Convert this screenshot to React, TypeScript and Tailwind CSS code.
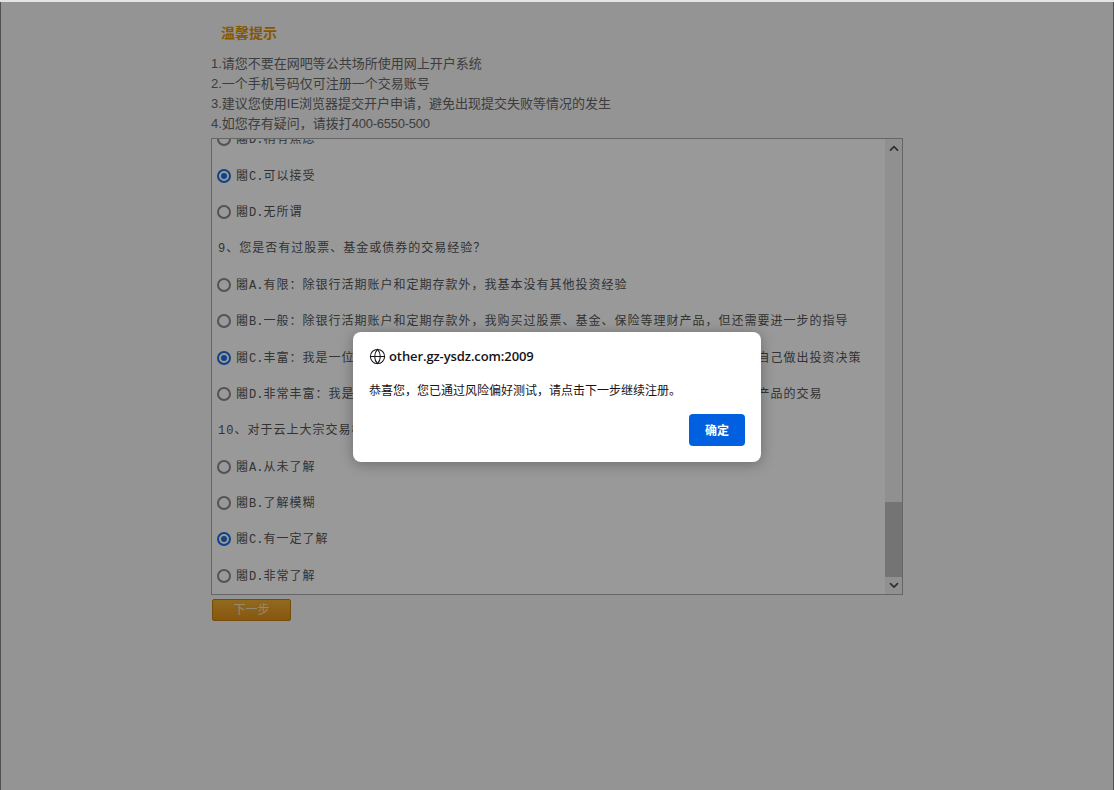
import { ChevronUp, ChevronDown, Globe } from 'lucide-react';

type Row = {
  text: string;
  opt?: string;
  checked?: boolean;
};

const rows: Row[] = [
  { opt: 'D.', text: '稍有焦虑' },
  { opt: 'C.', text: '可以接受', checked: true },
  { opt: 'D.', text: '无所谓' },
  { text: '9、您是否有过股票、基金或债券的交易经验？' },
  { opt: 'A.', text: '有限：除银行活期账户和定期存款外，我基本没有其他投资经验' },
  { opt: 'B.', text: '一般：除银行活期账户和定期存款外，我购买过股票、基金、保险等理财产品，但还需要进一步的指导' },
  { opt: 'C.', text: '丰富：我是一位有经验的投资者，参与过股票、基金等金融产品的交易，并且更倾向于自己做出投资决策', checked: true },
  { opt: 'D.', text: '非常丰富：我是一位资历非常深的投资者，参与过权证、期货、期权或创业板等高风险产品的交易' },
  { text: '10、对于云上大宗交易模式的了解程度？' },
  { opt: 'A.', text: '从未了解' },
  { opt: 'B.', text: '了解模糊' },
  { opt: 'C.', text: '有一定了解', checked: true },
  { opt: 'D.', text: '非常了解' },
];

function Radio({ checked }: { checked?: boolean }) {
  return (
    <span
      className={`flex h-[14px] w-[14px] shrink-0 items-center justify-center rounded-full border-2 bg-white ${
        checked ? 'border-[#1f6fe0]' : 'border-[#8a8a8f]'
      }`}
    >
      {checked && <span className="h-[6px] w-[6px] rounded-full bg-[#1f6fe0]" />}
    </span>
  );
}

export default function App() {
  return (
    <div className="relative flex h-[790px] w-[1114px] flex-col overflow-hidden bg-[#f7f7f7] font-['Liberation_Sans','Noto_Sans_CJK_SC',sans-serif]">
      <div className="h-[2px] shrink-0 bg-[#e4e4e4]" />

      <div className="relative flex-1 border-x border-x-[#888]">
        <div className="mx-auto w-[692px]">
          <h2 className="pl-[10px] pt-[21px] text-[14px] font-bold leading-5 text-[#e09000]">温馨提示</h2>
          <ul className="pt-[11px] text-[13px] leading-5 text-[#666]">
            <li>1.请您不要在网吧等公共场所使用网上开户系统</li>
            <li>2.一个手机号码仅可注册一个交易账号</li>
            <li>3.建议您使用IE浏览器提交开户申请，避免出现提交失败等情况的发生</li>
            <li>
              4.如您存有疑问，请拨打<span className="tracking-[-0.25px]">400-6550-500</span>
            </li>
          </ul>

          <div className="mt-[4px] flex h-[457px] overflow-hidden border border-[#aaa] bg-white">
            <div className="min-w-0 flex-1 overflow-hidden">
              <div className="-mt-[18px] pl-[5px] font-['Liberation_Mono','Noto_Sans_CJK_SC',monospace] text-[12px] tracking-[1px] text-[#555]">
                {rows.map((row) =>
                  row.opt ? (
                    <label key={row.text} className="flex h-[36.4px] items-center gap-[5px] whitespace-nowrap">
                      <Radio checked={row.checked} />
                      <span className="pt-[2px]">
                        闂<span className="tracking-normal">{row.opt}</span>
                        {row.text}
                      </span>
                    </label>
                  ) : (
                    <p key={row.text} className="flex h-[36.4px] items-center whitespace-nowrap pl-[1px] pt-[2px]">
                      {row.text}
                    </p>
                  ),
                )}
              </div>
            </div>

            <div className="flex w-[17px] shrink-0 flex-col items-center bg-[#f1f1f1] text-[#505050]">
              <ChevronUp size={14} strokeWidth={3} className="mt-[1px] h-[17px]" />
              <div className="mt-[345px] h-[76px] w-full bg-[#c1c1c1]" />
              <ChevronDown size={14} strokeWidth={3} className="h-[17px]" />
            </div>
          </div>

          <button className="mt-[4px] ml-[1px] h-[22px] w-[79px] rounded-[2px] border border-[#c47f10] bg-gradient-to-b from-[#f2b133] to-[#e2901a] text-[12px] leading-5 text-white/70">
            下一步
          </button>
        </div>
      </div>

      {/* dimmed page + browser alert */}
      <div className="absolute inset-0 top-[2px] bg-black/40" />
      <div className="absolute left-[353px] top-[332px] flex h-[130px] w-[408px] flex-col rounded-lg bg-white px-4 pt-[14px] shadow-[0_2px_14px_rgba(0,0,0,0.3)] font-['Open_Sans','Noto_Sans_CJK_SC',sans-serif]">
        <div className="flex items-center gap-[3px] text-[13px] font-semibold leading-[20px] tracking-[-0.1px] text-[#15141a]">
          <Globe size={17} strokeWidth={1.5} />
          <span>other.gz-ysdz.com:2009</span>
        </div>
        <p className="mt-[16px] text-[12px] leading-[18px] text-[#15141a]">
          恭喜您，您已通过风险偏好测试，请点击下一步继续注册。
        </p>
        <div className="mt-auto flex justify-end pb-4">
          <button className="h-8 w-14 rounded-[4px] bg-[#0060df] pt-[2px] text-[12px] font-bold text-white">确定</button>
        </div>
      </div>
    </div>
  );
}
